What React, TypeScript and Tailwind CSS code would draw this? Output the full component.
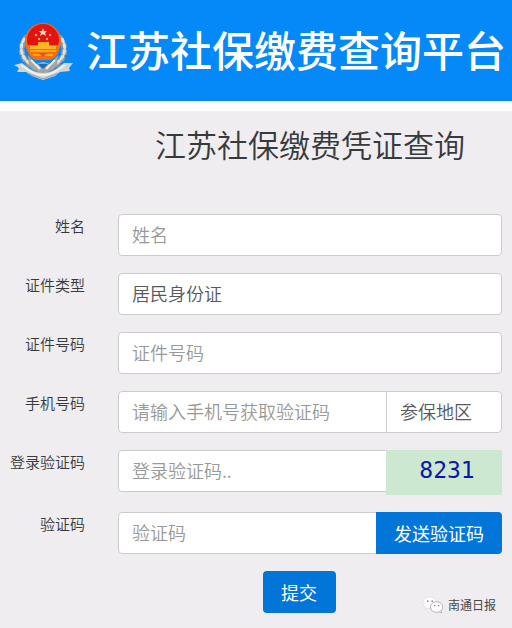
import React, { useState } from "react";
import clsx from "clsx";

interface FormRowProps {
  id: string;
  label: string;
  children: React.ReactNode;
}

const inputClass =
  "h-[42px] w-full min-w-0 appearance-none border border-[#cccccf] bg-white px-[13px] pb-[2px] text-[18px] font-[350] text-[#55595c] placeholder:text-[#999999] outline-none focus:border-[#66afe9]";

const FormRow: React.FC<FormRowProps> = ({ id, label, children }) => (
  <div className="grid grid-cols-[85px_1fr] gap-x-[33px]">
    <label htmlFor={id} className="text-right text-[15px] leading-6 font-[350] whitespace-nowrap text-[#373a3c]">
      {label}
    </label>
    <div className="flex min-w-0">{children}</div>
  </div>
);

const Emblem = () => (
  <svg viewBox="0 0 60 60" className="h-[60px] w-[60px] shrink-0" aria-hidden="true">
    {/* wheat ears */}
    <g fill="none" strokeLinecap="round">
      <path d="M12 17 C4 28 7 41 24 48" stroke="#8d989f" strokeWidth="6" strokeDasharray="2 5" />
      <path d="M46 17 C54 28 51 41 34 48" stroke="#8d989f" strokeWidth="6" strokeDasharray="2 5" />
      <path d="M10 18 C4 28 8 41 24 47" stroke="#dfe2e1" strokeWidth="3" strokeDasharray="3 3" />
      <path d="M48 18 C54 28 50 41 34 47" stroke="#dfe2e1" strokeWidth="3" strokeDasharray="3 3" />
    </g>
    <path d="M14 34 L22 43 L28 41 L30 41 L36 43 L44 34 L43 45 L33 52 L25 52 L15 45Z" fill="#a5a5a2" />
    <path d="M17 39 L26 48 M41 39 L32 48" stroke="#ececea" strokeWidth="2" />
    <path d="M24 43 L29 48 L34 43Z" fill="#176bbb" />
    {/* ribbon */}
    <path d="M0 44 L8 42 L16 48 Q29 56 42 48 L50 42 L59 42 L55 47 L56 50 L46 51 L41 55 L29 59 L18 55 L12 51 L3 51 L5 47Z" fill="#d0d4d5" />
    <path d="M7 44 L16 50 Q29 58 42 50 L51 44" fill="none" stroke="#f2f2f2" strokeWidth="2" />
    <path d="M13 52 L29 58 L45 52" fill="none" stroke="#9e9e9a" strokeWidth="1" />
    {/* shield */}
    <circle cx="29" cy="20" r="18" fill="#ef6a1c" />
    <circle cx="29" cy="19" r="16" fill="#e31312" />
    <path d="M12 24 H46 C45 32 42 37 36 39 H22 C16 37 13 32 12 24Z" fill="#f3700f" />
    <path d="M24 21 H35 V25 H42 V28 H16 V25 H24Z" fill="#ffb51d" />
    <path d="M16 30 H42 M19 34 H39" stroke="#ffa31b" strokeWidth="2" />
    <path d="M25 32 H33 L29 36Z" fill="#e0501a" />
    <path d="M29 7 L30 10 L33 10 L31 12 L32 15 L29 13 L26 15 L27 12 L25 10 L28 10Z" fill="#ffe4c8" />
    <g fill="#ffa477">
      <circle cx="22" cy="14" r="1.2" />
      <circle cx="36" cy="14" r="1.2" />
      <circle cx="25" cy="18" r="1.2" />
      <circle cx="33" cy="18" r="1.2" />
    </g>
  </svg>
);

const WechatIcon = () => (
  <svg viewBox="0 0 22 18" className="h-[18px] w-[22px]" aria-hidden="true">
    <path d="M8 1 C3.5 1 1 3.6 1 6.7 C1 8.5 2 10 3.5 11 L3 13.5 L5.8 12 C7 12.4 8.5 12.4 9.5 12 L14.5 6 C14 3 11.5 1 8 1Z" fill="#fff" stroke="#d5d5d7" strokeWidth="0.6" />
    <ellipse cx="14.6" cy="11" rx="6.2" ry="5.3" fill="#fff" stroke="#a5a5a8" strokeWidth="0.8" />
    <path d="M17 15.5 L19.5 17 L18.8 14" fill="#fff" stroke="#a5a5a8" strokeWidth="0.8" />
    <g fill="#8a8a8d">
      <circle cx="5.7" cy="5.2" r="0.9" />
      <circle cx="10.2" cy="5.2" r="0.9" />
      <circle cx="12.6" cy="9.6" r="0.8" />
      <circle cx="16.6" cy="9.6" r="0.8" />
    </g>
  </svg>
);

export default function App() {
  const [idType, setIdType] = useState("id-card");
  const [area, setArea] = useState("");

  return (
    <div className="flex min-h-screen flex-col bg-white font-['Noto_Sans_CJK_SC',sans-serif]">
      <header className="flex h-[101px] items-center gap-[12px] bg-[#0588f8] pl-[14px]">
        <Emblem />
        <h1 className="pb-1 text-[42px] font-medium whitespace-nowrap text-white">江苏社保缴费查询平台</h1>
      </header>

      <main className="relative mt-[10px] grow bg-[#efedef] pr-[10px] pb-[14px]">
        <h2 className="pt-[10px] pl-[118px] text-center text-[31px] leading-[46px] font-[350] whitespace-nowrap text-[#373a3c]">
          江苏社保缴费凭证查询
        </h2>

        <form className="mt-[47px] flex flex-col gap-[17px]" onSubmit={(e) => e.preventDefault()}>
          <FormRow id="name" label="姓名">
            <input id="name" type="text" placeholder="姓名" className={clsx(inputClass, "rounded-[4px]")} />
          </FormRow>

          <FormRow id="idType" label="证件类型">
            <select
              id="idType"
              value={idType}
              onChange={(e) => setIdType(e.target.value)}
              className={clsx(inputClass, "rounded-[4px]")}
            >
              <option value="id-card">居民身份证</option>
            </select>
          </FormRow>

          <FormRow id="idNumber" label="证件号码">
            <input id="idNumber" type="text" placeholder="证件号码" className={clsx(inputClass, "rounded-[4px]")} />
          </FormRow>

          <FormRow id="phone" label="手机号码">
            <input id="phone" type="tel" placeholder="请输入手机号获取验证码" className={clsx(inputClass, "rounded-l-[4px]")} />
            <select
              aria-label="参保地区"
              value={area}
              onChange={(e) => setArea(e.target.value)}
              className="-ml-px h-[42px] w-[116px] shrink-0 appearance-none rounded-r-[4px] border border-[#cccccf] bg-white px-[13px] pb-[2px] text-[18px] font-[350] text-[#55595c]"
            >
              <option value="">参保地区</option>
            </select>
          </FormRow>

          <FormRow id="captcha" label="登录验证码">
            <input id="captcha" type="text" placeholder="登录验证码.." className={clsx(inputClass, "rounded-l-[4px]")} />
            <button
              type="button"
              className="-ml-px h-[45px] w-[116px] shrink-0 bg-[#cde8d1] pb-1 pl-[6px] font-['DejaVu_Sans_Mono',monospace] text-[23px] text-[#0b18a4]"
            >
              8231
            </button>
          </FormRow>

          <FormRow id="smsCode" label="验证码">
            <input id="smsCode" type="text" placeholder="验证码" className={clsx(inputClass, "rounded-l-[4px]")} />
            <button type="button" className="-ml-px h-[42px] w-[126px] shrink-0 rounded-r-[4px] bg-[#0275d8] text-[18px] text-white">
              发送验证码
            </button>
          </FormRow>

          <div className="pl-[96px] text-center">
            <button type="submit" className="h-[42px] w-[73px] rounded-[4px] bg-[#0275d8] text-[18px] text-white">
              提交
            </button>
          </div>
        </form>

        <div className="absolute right-4 bottom-[14px] flex items-center gap-1 text-[12px] leading-[18px] text-[#47474a]">
          <WechatIcon />
          <span>南通日报</span>
        </div>
      </main>
    </div>
  );
}
